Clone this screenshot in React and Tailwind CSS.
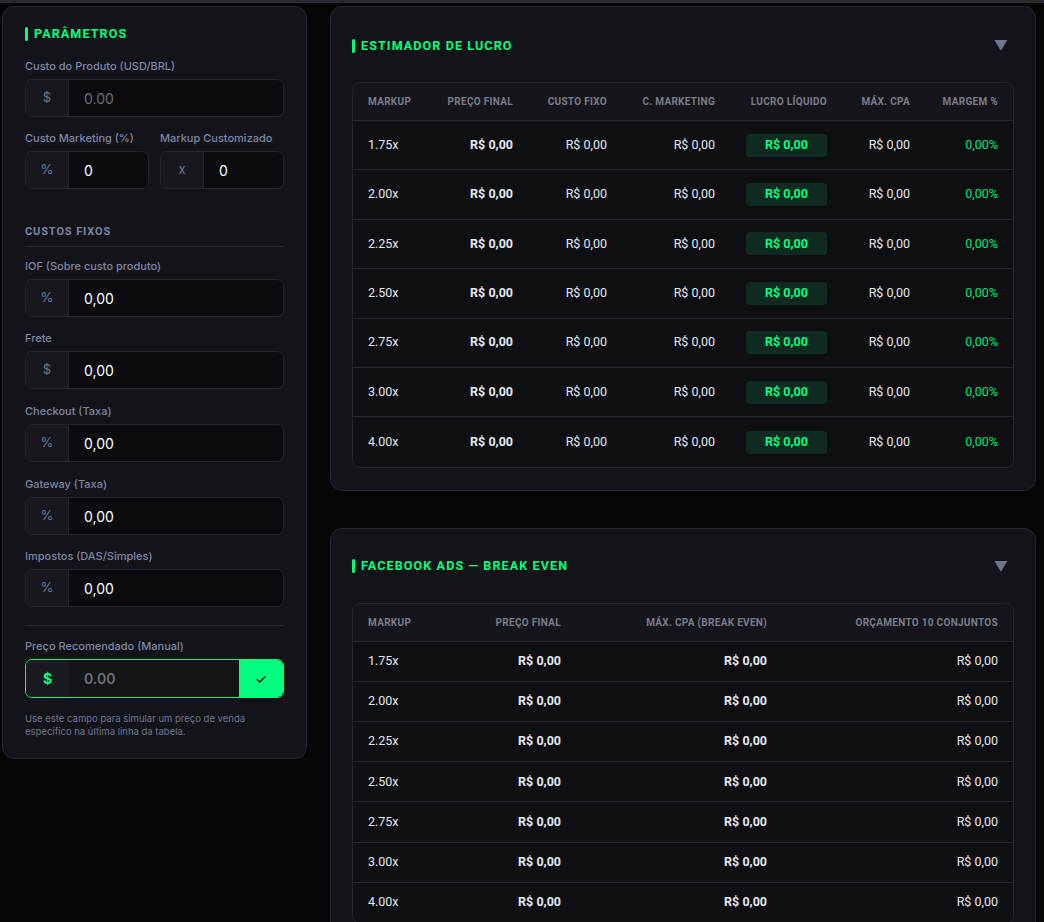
import React from "react";

const F = { fontFamily: "Inter, 'Noto Sans', sans-serif" };
const H = { fontFamily: "Roboto, Inter, sans-serif" };

function Field({ label, prefix, value, placeholder, className = "" }) {
  return (
    <div className={className}>
      <div className="text-[11px] leading-[14px] text-[#7e84a3] mb-[6px] font-medium">{label}</div>
      <div className="flex h-[38px] rounded-[7px] border border-[#23252f] overflow-hidden bg-[#0b0b0f]">
        <div className="w-[43px] shrink-0 flex items-center justify-center bg-[#17181e] border-r border-[#23252f] text-[13px] text-[#6f7590]">{prefix}</div>
        <div className={"flex items-center pl-[15px] text-[14px] " + (placeholder ? "text-[#6d6f78]" : "text-white")}>{value}</div>
      </div>
    </div>
  );
}

function Title({ children }) {
  return (
    <div className="flex items-center gap-[6px]">
      <div className="w-[3px] h-[14px] rounded-sm bg-[#00ff7f]" />
      <div style={H} className="text-[12.5px] leading-[16px] font-bold tracking-[0.09em] text-[#00ff7f]">{children}</div>
    </div>
  );
}

const marks = ["1.75x", "2.00x", "2.25x", "2.50x", "2.75x", "3.00x", "4.00x"];

export default function App() {
  return (
    <div style={F} className="min-h-[922px] bg-[#060609] relative">
      <div className="absolute top-0 left-0 right-0 h-[3px] bg-[#2a2b30]" />
      <div className="flex items-start gap-[23px] pl-[2px] pt-[6px] pr-[8px]">
        <div className="w-[305px] shrink-0 rounded-[12px] border border-[#23252f] bg-[#131419] px-[22px] pt-[19px] pb-[20px]">
          <Title>PARÂMETROS</Title>
          <Field className="mt-[17px]" label="Custo do Produto (USD/BRL)" prefix="$" value="0.00" placeholder />
          <div className="flex gap-[11px] mt-[14px]">
            <Field className="flex-1" label="Custo Marketing (%)" prefix="%" value="0" />
            <Field className="flex-1" label="Markup Customizado" prefix="x" value="0" />
          </div>
          <div style={H} className="mt-[36px] text-[11px] leading-[14px] font-bold tracking-[0.08em] text-[#7e84a3] pb-[7px] border-b border-[#262833]">CUSTOS FIXOS</div>
          <Field className="mt-[12px]" label="IOF (Sobre custo produto)" prefix="%" value="0,00" />
          <Field className="mt-[14px]" label="Frete" prefix="$" value="0,00" />
          <Field className="mt-[15px]" label="Checkout (Taxa)" prefix="%" value="0,00" />
          <Field className="mt-[15px]" label="Gateway (Taxa)" prefix="%" value="0,00" />
          <Field className="mt-[14px]" label="Impostos (DAS/Simples)" prefix="%" value="0,00" />
          <div className="border-t border-[#262833] mt-[18px] pt-[13px]">
            <div className="text-[11px] leading-[14px] text-[#7e84a3] mb-[6px] font-medium">Preço Recomendado (Manual)</div>
            <div className="flex h-[39px] rounded-[7px] border border-[#00ff7f] overflow-hidden bg-[#121418]">
              <div className="w-[43px] flex items-center justify-center bg-[#181b1f] text-[14px] font-bold text-[#00ff7f]">$</div>
              <div className="flex-1 flex items-center pl-[15px] text-[14px] font-semibold text-[#6d6f78]">0.00</div>
              <div className="w-[44px] flex items-center justify-center bg-[#00ff7f] text-black text-[14px]">✓</div>
            </div>
            <div className="mt-[14px] text-[9.5px] leading-[13px] text-[#6f7590]">Use este campo para simular um preço de venda específico na última linha da tabela.</div>
          </div>
        </div>

        <div className="flex-1 flex flex-col gap-[37px]">
          <div className="rounded-[12px] border border-[#23252f] bg-[#131419] px-[21px] pt-[28px] pb-[22px]">
            <div className="flex items-center justify-between pr-[6px]">
              <Title>ESTIMADOR DE LUCRO</Title>
              <span className="text-[#6f7590] text-[14px]">▼</span>
            </div>
            <div className="mt-[26px] rounded-[8px] border border-[#23252f] bg-[#0e0f13] overflow-hidden">
              <div style={H} className="grid grid-cols-[60px_85px_94px_108px_112px_83px_1fr] h-[38px] items-center px-[15px] text-[10px] font-bold tracking-[0.03em] text-[#7a7c88] border-b border-[#23252f] bg-[#15161b]">
                <div>MARKUP</div><div className="text-right">PREÇO FINAL</div><div className="text-right">CUSTO FIXO</div><div className="text-right">C. MARKETING</div><div className="text-right">LUCRO LÍQUIDO</div><div className="text-right">MÁX. CPA</div><div className="text-right">MARGEM %</div>
              </div>
              {marks.map((m, i) => (
                <div key={m} style={H} className={"grid grid-cols-[60px_85px_94px_108px_112px_83px_1fr] h-[49.4px] items-center px-[15px] text-[12.5px] text-[#e6e8ee] " + (i < 6 ? "border-b border-[#23252f]" : "")}>
                  <div>{m}</div>
                  <div className="text-right font-bold">R$ 0,00</div>
                  <div className="text-right">R$ 0,00</div>
                  <div className="text-right">R$ 0,00</div>
                  <div className="flex justify-end"><span className="w-[81px] h-[23px] rounded-[4px] bg-[#0f2a20] text-[#00ff7f] font-bold flex items-center justify-center">R$ 0,00</span></div>
                  <div className="text-right">R$ 0,00</div>
                  <div className="text-right text-[#00e676]">0,00%</div>
                </div>
              ))}
            </div>
          </div>

          <div className="rounded-[12px] border border-[#23252f] bg-[#131419] px-[21px] pt-[27px] pb-[22px]">
            <div className="flex items-center justify-between pr-[6px]">
              <Title>FACEBOOK ADS — BREAK EVEN</Title>
              <span className="text-[#6f7590] text-[14px]">▼</span>
            </div>
            <div className="mt-[26px] rounded-[8px] border border-[#23252f] bg-[#0e0f13] overflow-hidden">
              <div style={H} className="grid grid-cols-[60px_133px_206px_1fr] h-[38px] items-center px-[15px] text-[10px] font-bold tracking-[0.03em] text-[#7a7c88] border-b border-[#23252f] bg-[#15161b]">
                <div>MARKUP</div><div className="text-right">PREÇO FINAL</div><div className="text-right">MÁX. CPA (BREAK EVEN)</div><div className="text-right">ORÇAMENTO 10 CONJUNTOS</div>
              </div>
              {marks.map((m) => (
                <div key={m} style={H} className="grid grid-cols-[60px_133px_206px_1fr] h-[40.2px] items-center px-[15px] text-[12.5px] text-[#e6e8ee] border-b border-[#23252f]">
                  <div>{m}</div>
                  <div className="text-right font-bold">R$ 0,00</div>
                  <div className="text-right font-bold">R$ 0,00</div>
                  <div className="text-right">R$ 0,00</div>
                </div>
              ))}
            </div>
          </div>
        </div>
      </div>
    </div>
  );
}
